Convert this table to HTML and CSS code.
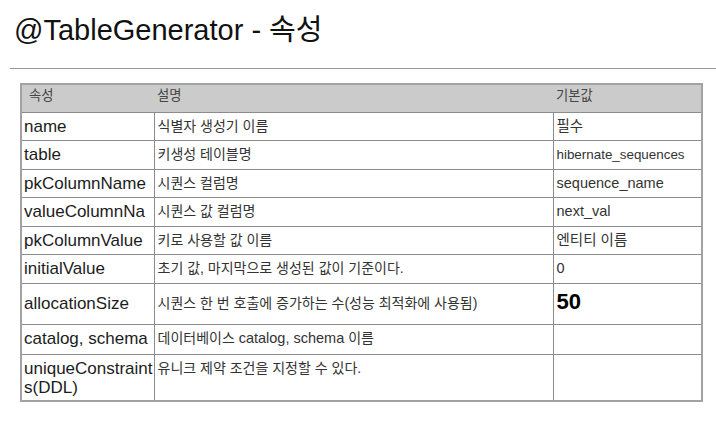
FILE: index.html
```html
<!DOCTYPE html>
<html lang="ko">
<head>
<meta charset="utf-8">
<title>@TableGenerator - 속성</title>
<link rel="stylesheet" href="styles.css">
</head>
<body>
<h1 class="title">@TableGenerator - 속성</h1>
<div class="rule"></div>
<table class="props">
  <colgroup><col class="c1"><col class="c2"><col class="c3"></colgroup>
  <thead>
    <tr class="head"><th class="hk">속성</th><th>설명</th><th>기본값</th></tr>
  </thead>
  <tbody>
    <tr><td class="key">name</td><td class="desc">식별자 생성기 이름</td><td class="def">필수</td></tr>
    <tr><td class="key">table</td><td class="desc">키생성 테이블명</td><td class="def fit">hibernate_sequences</td></tr>
    <tr><td class="key">pkColumnName</td><td class="desc">시퀀스 컬럼명</td><td class="def">sequence_name</td></tr>
    <tr><td class="key">valueColumnNa</td><td class="desc">시퀀스 값 컬럼명</td><td class="def">next_val</td></tr>
    <tr><td class="key">pkColumnValue</td><td class="desc">키로 사용할 값 이름</td><td class="def">엔티티 이름</td></tr>
    <tr><td class="key">initialValue</td><td class="desc">초기 값, 마지막으로 생성된 값이 기준이다.</td><td class="def">0</td></tr>
    <tr class="tall"><td class="key">allocationSize</td><td class="desc">시퀀스 한 번 호출에 증가하는 수(성능 최적화에 사용됨)</td><td class="def"><span class="big">50</span></td></tr>
    <tr class="mid"><td class="key">catalog, schema</td><td class="desc">데이터베이스 <span class="en">catalog, schema</span> 이름</td><td class="def"></td></tr>
    <tr class="last"><td class="key">uniqueConstraint<br>s(DDL)</td><td class="desc">유니크 제약 조건을 지정할 수 있다.</td><td class="def"></td></tr>
  </tbody>
</table>
</body>
</html>
```

FILE: styles.css
```css
html, body {
  margin: 0;
  background: #ffffff;
}

body {
  font-family: "Liberation Sans", "Noto Sans CJK KR", sans-serif;
  color: #222;
}

.title {
  margin: 0;
  padding: 14px 0 0 14px;
  font-size: 29px;
  font-weight: 400;
  line-height: 32px;
  color: #111;
}

.rule {
  margin: 22px 0 0 10px;
  border-top: 1px solid #9a9a9a;
}

.props {
  margin: 14px 0 0 20px;
  width: 681px;
  table-layout: fixed;
  border-collapse: collapse;
  border: 2px solid #a2a2a2;
}

.c1 { width: 133px; }
.c2 { width: 399px; }
.c3 { width: 149px; }

.head {
  height: 28px;
}

.props th {
  background: #cbcbcb;
  font-weight: 400;
  text-align: left;
  font-size: 13.3px;
  line-height: 17px;
  color: #444;
  padding: 2px 3px 7px;
  vertical-align: top;
  border-bottom: 1px solid #8c8c8c;
}

.props th.hk {
  padding-left: 7px;
}

.props td {
  border: 1px solid #8c8c8c;
  padding: 4px 3px;
  vertical-align: middle;
  line-height: 19.5px;
  color: #333;
}

.props td.key {
  font-size: 17px;
  color: #1c1c1c;
  padding-left: 2px;
  padding-right: 1px;
}

.props td.desc {
  font-size: 14px;
}

.props td.def {
  font-size: 14.5px;
}

.props td.fit {
  font-size: 13.4px;
}

.en {
  font-size: 14.5px;
}

.tall {
  height: 41px;
}

.mid {
  height: 30px;
}

.props .last td {
  vertical-align: top;
  padding-bottom: 2px;
}

.big {
  font-size: 22px;
  font-weight: 700;
  color: #000;
}
```
